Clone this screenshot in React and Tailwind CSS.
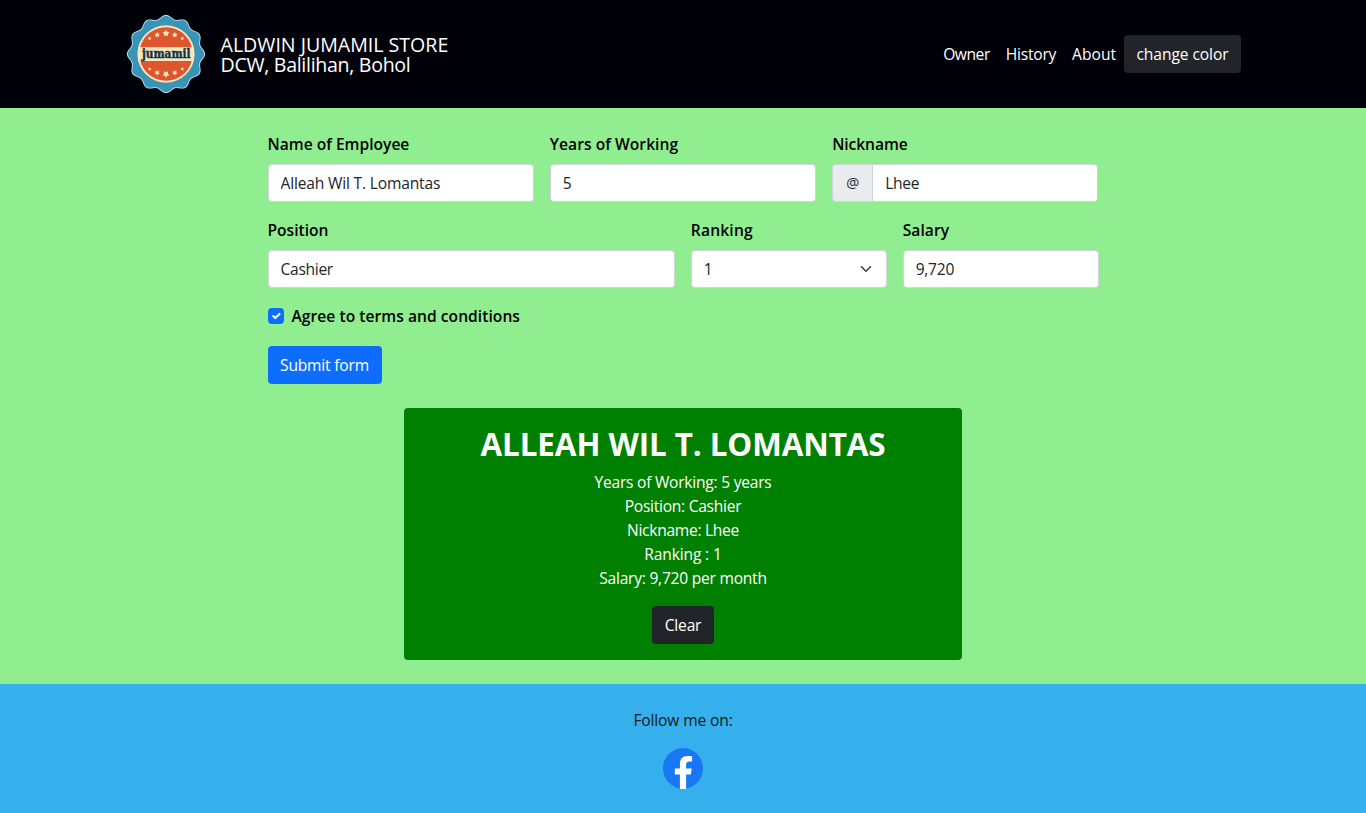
import React from 'react';

const sealPath = (radius, depth) => {
  const points = [];
  for (let i = 0; i < 240; i += 1) {
    const angle = (i / 240) * Math.PI * 2 - Math.PI / 2;
    const r = radius + depth * Math.cos(12 * (angle + Math.PI / 2));
    points.push(`${(40 + r * Math.cos(angle)).toFixed(2)} ${(40 + r * Math.sin(angle)).toFixed(2)}`);
  }
  return `M${points.join('L')}Z`;
};

const starPath = (cx, cy, r, flip) => {
  const points = [];
  for (let i = 0; i < 10; i += 1) {
    const angle = (i / 10) * Math.PI * 2 + (flip ? Math.PI / 2 : -Math.PI / 2);
    const rr = i % 2 ? r * 0.55 : r;
    points.push(`${(cx + rr * Math.cos(angle)).toFixed(2)} ${(cy + rr * Math.sin(angle)).toFixed(2)}`);
  }
  return `M${points.join('L')}Z`;
};

const stars = [
  [23.7, 24.4, 1.9], [31.2, 20.9, 2.8], [40, 19.3, 3.6], [48.8, 20.9, 2.8], [56.3, 24.4, 1.9],
  [23.7, 55, 1.9, true], [31.2, 58.7, 2.8, true], [40, 60.2, 3.6, true], [48.8, 58.7, 2.8, true], [56.3, 55, 1.9, true],
];

function Logo() {
  return (
    <svg className="size-20 shrink-0" viewBox="0 0 80 80" aria-label="jumamil">
      <path d={sealPath(37.3, 1.8)} fill="#b9e2f0" />
      <path d={sealPath(36.3, 1.8)} fill="#3a94b7" />
      <circle cx="40" cy="40" r="29.3" fill="#2f83a6" />
      <circle cx="40" cy="40" r="28.7" fill="#f7e6bd" />
      <circle cx="40" cy="40" r="26.7" fill="#dd562e" />
      <rect x="12" y="33.2" width="56" height="13.8" fill="#f7e6bd" />
      {stars.map(([x, y, r, flip]) => (
        <path key={`${x}-${y}`} d={starPath(x, y, r, flip)} fill="#f7e6bd" />
      ))}
      <text
        x="16"
        y="44.2"
        textLength="48.6"
        lengthAdjust="spacingAndGlyphs"
        className='font-["DejaVu_Serif",serif] text-[12px] font-bold'
        fill="#0f3346"
        stroke="#0f3346"
        strokeWidth="0.45"
      >
        jumamil
      </text>
    </svg>
  );
}

function Field({ label, labelClass, className, children }) {
  return (
    <div className={`flex flex-col gap-2 ${className}`}>
      <label className={`font-semibold leading-6 text-black ${labelClass}`}>{label}</label>
      {children}
    </div>
  );
}

const control = 'h-[38px] w-full min-w-0 border border-[#ced4da] bg-white px-3 leading-6 text-[#212529] outline-none';

export default function App() {
  return (
    <div className='flex h-[813px] flex-col bg-[#90ee90] font-["Open_Sans",sans-serif] text-[15.6px] leading-6'>
      <header className="flex h-[108px] shrink-0 items-center justify-between bg-[#000008] pr-[125px] pl-[126px] text-white">
        <div className="flex items-center gap-[14.5px]">
          <Logo />
          <div className="pt-[2px] text-[19.6px] leading-5 whitespace-nowrap">
            <div className="tracking-[-0.01px]">ALDWIN JUMAMIL STORE</div>
            <div className="tracking-[-0.306px]">DCW, Balilihan, Bohol</div>
          </div>
        </div>
        <nav className="flex items-center whitespace-nowrap">
          <a className="mr-4 tracking-[-0.44px]">Owner</a>
          <a className="mr-4 tracking-[-0.25px]">History</a>
          <a className="mr-2">About</a>
          <button className="flex h-[38px] w-[117px] items-center justify-center rounded bg-[#212529] tracking-[-0.08px]">
            change color
          </button>
        </nav>
      </header>

      <main className="flex flex-1 flex-col pt-6">
        <form className="mx-auto flex w-[831px] flex-col gap-4">
          <div className="flex gap-4">
            <Field label="Name of Employee" className="flex-1">
              <input className={`${control} rounded tracking-[-0.18px]`} defaultValue="Alleah Wil T. Lomantas" />
            </Field>
            <Field label="Years of Working" labelClass="tracking-[0.04px]" className="flex-1">
              <input className={`${control} rounded`} defaultValue="5" />
            </Field>
            <Field label="Nickname" labelClass="tracking-[-0.07px]" className="flex-1">
              <div className="flex">
                <span className="flex h-[38px] w-[40px] shrink-0 items-center justify-center rounded-l border border-r-0 border-[#ced4da] bg-[#e9ecef] text-[14.5px] text-[#212529]">
                  @
                </span>
                <input className={`${control} rounded-r tracking-[-0.32px]`} defaultValue="Lhee" />
              </div>
            </Field>
          </div>
          <div className="flex gap-4">
            <Field label="Position" className="w-[407.3px]">
              <input className={`${control} rounded tracking-[-0.3px]`} defaultValue="Cashier" />
            </Field>
            <Field label="Ranking" labelClass="tracking-[0.179px]" className="flex-1">
              <button type="button" className={`${control} flex items-center justify-between rounded`}>
                <span>1</span>
                <svg className="mr-[2px] size-3" viewBox="0 0 16 16" fill="none" stroke="#343a40" strokeWidth="2" strokeLinecap="round" strokeLinejoin="round">
                  <path d="m2 5 6 6 6-6" />
                </svg>
              </button>
            </Field>
            <Field label="Salary" labelClass="tracking-[0.068px]" className="flex-1">
              <input className={`${control} rounded tracking-[-0.25px]`} defaultValue="9,720" />
            </Field>
          </div>
          <label className="flex h-[26px] items-start gap-2 font-semibold tracking-[0.04px] text-black">
            <span className="mt-1 flex size-4 items-center justify-center rounded bg-[#0d6efd]">
              <svg className="size-[14px]" viewBox="0 0 20 20" fill="none" stroke="#fff" strokeWidth="3" strokeLinecap="round" strokeLinejoin="round">
                <path d="m6 10 3 3 6-6" />
              </svg>
            </span>
            Agree to terms and conditions
          </label>
          <button type="button" className="h-[38px] w-[114px] rounded bg-[#0d6efd] tracking-[-0.2px] text-white">
            Submit form
          </button>
        </form>

        <section className="mx-auto mt-6 flex h-[252px] w-[558px] flex-col items-center rounded bg-[#008000] pt-[17px] text-white">
          <h2 className="mb-[7px] text-[31.4px] leading-[38.4px] font-bold tracking-[-0.094px]">ALLEAH WIL T. LOMANTAS</h2>
          <p className="tracking-[-0.246px]">Years of Working: 5 years</p>
          <p className="tracking-[-0.28px]">Position: Cashier</p>
          <p className="tracking-[-0.295px]">Nickname: Lhee</p>
          <p className="tracking-[-0.149px]">Ranking : 1</p>
          <p className="tracking-[-0.245px]">Salary: 9,720 per month</p>
          <button className="mt-4 h-[38px] w-[62px] rounded bg-[#212529] tracking-[-0.212px]">Clear</button>
        </section>
      </main>

      <footer className="flex h-[129px] shrink-0 flex-col items-center gap-4 bg-[#36b0ec] pt-6">
        <p className="tracking-[-0.15px] text-[#0b1a22]">Follow me on:</p>
        <svg className="h-[41px] w-10" viewBox="0 0 40 41">
          <ellipse cx="20" cy="20.4" rx="20" ry="20.4" fill="#1877f2" />
          <path
            d="M16.9 40.9V26.4H11.8v-6h5.1v-4.6c0-5.1 3.1-7.8 7.7-7.8 2.2 0 4.5.3 4.5.3v5.1h-2.6c-2.5 0-3.4 1.5-3.4 3.1v3.9h5.6l-.9 6h-4.7v14.5z"
            fill="#fff"
          />
        </svg>
      </footer>
    </div>
  );
}
